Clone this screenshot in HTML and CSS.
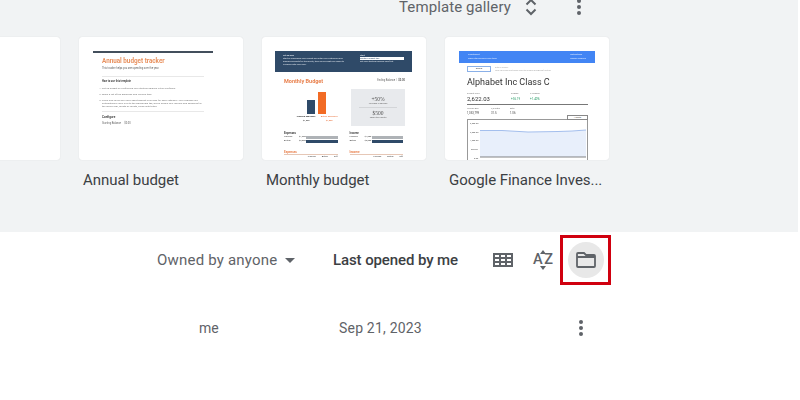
FILE: index.html
```html
<!DOCTYPE html>
<html lang="en">
<head>
    <meta charset="UTF-8">
    <meta name="viewport" content="width=device-width, initial-scale=1.0">
    <title>Google Sheets</title>
    <link rel="stylesheet" href="styles.css">
</head>
<body>
    <section class="gallery">
        <div class="gallery-head">
            <span class="gallery-label">Template gallery</span>
            <svg class="unfold" width="16" height="18" viewBox="0 0 16 18"><path d="M3.500 6.500 8 2l4.500 4.500M3.500 11.500 8 16l4.500-4.500" fill="none" stroke="#5f6368" stroke-width="2"/></svg>
            <div class="kebab"><i></i><i></i><i></i></div>
        </div>

        <div class="templates">
            <div class="template">
                <div class="thumb"></div>
            </div>

            <div class="template">
                <div class="thumb thumb-annual">
                    <div class="annual-bar"></div>
                    <div class="annual-body">
                        <div class="annual-title">Annual budget tracker</div>
                        <div class="tiny annual-sub">This tracker helps you see spending over the year.</div>
                        <div class="annual-rule"></div>
                        <div class="tiny tiny-bold annual-how">How to use this template</div>
                        <ol class="annual-list">
                            <li>Set up budget by confirming your starting balance in the Configure</li>
                            <li>Make a list of the Expenses and Income tabs</li>
                            <li>Track how much you have spent against your plan for each category. Your changes will automatically carry over to the Dashboard tab, which shows your income and spending for the whole year, month by month, along with totals</li>
                        </ol>
                        <div class="annual-rule"></div>
                        <div class="tiny tiny-bold annual-config">Configure</div>
                        <div class="tiny annual-start">Starting Balance &nbsp; &nbsp; $0.00</div>
                    </div>
                </div>
                <div class="template-name">Annual budget</div>
            </div>

            <div class="template">
                <div class="thumb thumb-monthly">
                    <div class="monthly-banner">
                        <div class="monthly-intro">
                            <div class="tiny-bold">Set up plan</div>
                            <div>Start by organizing your budget and enter your categories and planned amounts for the month, then record what you spend to compare with your plan.</div>
                        </div>
                        <div class="monthly-start">
                            <div class="tiny-bold">Start</div>
                            <div class="monthly-input">Monthly budget tips</div>
                            <div>Set your starting balance here first</div>
                        </div>
                    </div>
                    <div class="monthly-head">
                        <div class="monthly-title">Monthly Budget</div>
                        <div class="tiny">Ending Balance &nbsp;|&nbsp; <b>$0.00</b></div>
                    </div>
                    <div class="monthly-main">
                        <div class="monthly-chart">
                            <div class="bars">
                                <div class="bar bar-dark"></div>
                                <div class="bar bar-orange"></div>
                            </div>
                            <div class="bar-labels">
                                <div class="bar-label"><b>Planned Expenses</b><br>$4,500</div>
                                <div class="bar-label bar-label-orange">Actual Expenses<br>$4,800</div>
                            </div>
                        </div>
                        <div class="monthly-stat">
                            <div class="stat-num">+50%</div>
                            <div class="stat-sub">Increase in savings</div>
                            <div class="stat-rule"></div>
                            <div class="stat-num">$500</div>
                            <div class="stat-sub">saved this month</div>
                        </div>
                    </div>
                    <div class="monthly-tables">
                        <div class="monthly-table">
                            <div class="tiny-bold">Expenses</div>
                            <div class="meter"><span>Planned</span><em>$1,500</em><i class="meter-grey"></i></div>
                            <div class="meter"><span>Actual</span><em>$2,000</em><i class="meter-dark"></i></div>
                        </div>
                        <div class="monthly-table">
                            <div class="tiny-bold">Income</div>
                            <div class="meter"><span>Planned</span><em>$1,000</em><i class="meter-grey"></i></div>
                            <div class="meter"><span>Actual</span><em>$2,000</em><i class="meter-dark"></i></div>
                        </div>
                    </div>
                    <div class="monthly-tables monthly-lower">
                        <div class="lower-col">
                            <div class="lower-title">Expenses</div>
                            <div class="lower-cols"><span>Planned</span><span>Actual</span><span>Diff</span></div>
                        </div>
                        <div class="lower-col">
                            <div class="lower-title">Income</div>
                            <div class="lower-cols"><span>Planned</span><span>Actual</span><span>Diff</span></div>
                        </div>
                    </div>
                </div>
                <div class="template-name">Monthly budget</div>
            </div>

            <div class="template">
                <div class="thumb thumb-finance">
                    <div class="finance-banner">
                        <div>Investment<br>Track stock prices over time</div>
                        <div>Instructions<br>Google Finance</div>
                    </div>
                    <div class="finance-body">
                        <div class="finance-search">
                            <div class="finance-symbol">GOOG</div>
                            <div class="tiny finance-hint">Enter a symbol<br>Look up prices and trends using the GOOGLEFINANCE function</div>
                        </div>
                        <div class="finance-name">Alphabet Inc Class C</div>
                        <div class="finance-quote">
                            <div class="quote-main"><span>Current Price</span><b>2,622.03</b></div>
                            <div class="quote-item"><span>Change</span><b>+36.19</b></div>
                            <div class="quote-item"><span>% Change</span><b>+1.40%</b></div>
                        </div>
                        <div class="finance-stats">
                            <div class="stat-wide"><span>Volume Avg</span><b>1,053,799</b></div>
                            <div class="stat-narrow"><span>P/E Ratio</span><b>31.5</b></div>
                            <div class="stat-narrow"><span>Beta</span><b>1.06</b></div>
                        </div>
                        <div class="finance-chart">
                            <div class="finance-range">1 Month</div>
                            <svg width="119" height="42" viewBox="0 0 119 42">
                                <path d="M12 10.500H34L60 12 90 11.500 104 11 118 10V37H12Z" fill="#e8effb"/>
                                <path d="M12 10.500H34L60 12 90 11.500 104 11 118 10" fill="none" stroke="#8fb0e8" stroke-width=".8"/>
                                <path d="M12 37H118" stroke="#666" stroke-width=".8"/>
                                <g class="chart-labels">
                                    <text x="2" y="4">3,000.00</text>
                                    <text x="2" y="12.500">2,000.00</text>
                                    <text x="2" y="21">1,000.00</text>
                                    <text x="3" y="30">500.00</text>
                                    <text x="6" y="38.500">0.00</text>
                                </g>
                            </svg>
                        </div>
                    </div>
                </div>
                <div class="template-name">Google Finance Inves...</div>
            </div>
        </div>
    </section>

    <div class="toolbar">
        <div class="owner-filter">
            <span>Owned by anyone</span>
            <span class="caret"></span>
        </div>
        <div class="sort-label">Last opened by me</div>
        <svg class="grid-icon" width="20" height="14" viewBox="0 0 20 14"><path d="M1 1h18v12H1zM1 5h18M1 9h18M7 1v12M13 1v12" fill="none" stroke="#5f6368" stroke-width="2"/></svg>
        <div class="az-icon">
            <span>A</span>
            <span>Z</span>
            <svg class="az-up" width="6" height="4" viewBox="0 0 6 4"><path d="M3 0 6 4H0Z" fill="#5f6368"/></svg>
            <svg class="az-down" width="6" height="4" viewBox="0 0 6 4"><path d="M0 0H6L3 4Z" fill="#5f6368"/></svg>
        </div>
        <div class="highlight">
            <div class="folder-btn">
                <svg width="20" height="16" viewBox="0 0 20 16"><path d="M2 1h6l2 2h8a1 1 0 0 1 1 1v10a1 1 0 0 1-1 1H2a1 1 0 0 1-1-1V2a1 1 0 0 1 1-1ZM1.500 5h17" fill="none" stroke="#5f6368" stroke-width="1.800"/></svg>
            </div>
        </div>
    </div>

    <div class="file-row">
        <div class="file-owner">me</div>
        <div class="file-date">Sep 21, 2023</div>
        <div class="kebab"><i></i><i></i><i></i></div>
    </div>
</body>
</html>
```

FILE: styles.css
```css
body {
    margin: 0;
    width: 800px;
    height: 400px;
    overflow: hidden;
    background-color: #fff;
    font-family: Roboto, "Liberation Sans", sans-serif;
    color: #3c4043;
}

/* gallery */
.gallery {
    width: 798px;
    height: 232px;
    background-color: #f1f3f4;
    overflow: hidden;
}
.gallery-head {
    display: flex;
    align-items: center;
    height: 14px;
    padding-left: 399px;
}
.gallery-label {
    width: 124px;
    font-size: 15px;
    line-height: 14px;
    letter-spacing: 0.1px;
    white-space: nowrap;
    color: #5f6368;
}
.unfold {
    margin-right: 38px;
}
.kebab {
    display: flex;
    flex-direction: column;
    gap: 2px;
    width: 4px;
}
.kebab i {
    width: 4px;
    height: 4px;
    border-radius: 50%;
    background-color: #5f6368;
}
.templates {
    display: flex;
    gap: 19px;
    margin: 23px 0 0 -104px;
}
.template {
    width: 164px;
    flex-shrink: 0;
}
.thumb {
    height: 123px;
    box-sizing: border-box;
    background-color: #fff;
    border-radius: 3px;
    overflow: hidden;
    box-shadow: 0 0 1px rgba(60, 64, 67, 0.2);
}
.template-name {
    margin: 11px 0 0 4px;
    font-size: 15px;
    line-height: 18px;
    letter-spacing: -0.05px;
    white-space: nowrap;
    color: #3c4043;
}

/* tiny text inside thumbnails */
.tiny {
    font-size: 2.600px;
    line-height: 4px;
    color: #666;
}
.tiny-bold {
    font-weight: 700;
}

/* annual budget */
.thumb-annual {
    padding: 14px 30px 0 14px;
}
.annual-bar {
    height: 2px;
    background-color: #434f5c;
}
.annual-body {
    padding: 4px 9px 0;
    filter: blur(0.35px);
}
.annual-title {
    font-size: 6.300px;
    line-height: 8px;
    font-weight: 700;
    color: #e8915f;
}
.annual-sub {
    margin-top: 2px;
}
.annual-rule {
    height: 1px;
    margin: 5px 0 3px;
    background-color: #e8e8e8;
}
.annual-how {
    margin-top: 2px;
    color: #444;
}
.annual-list {
    margin: 2.500px 0 0;
    padding: 0;
    font-size: 2.500px;
    line-height: 3px;
    color: #777;
}
.annual-list li {
    margin-bottom: 3px;
}
.annual-list + .annual-rule {
    margin-top: 3px;
}
.annual-config {
    margin-top: 3.500px;
    font-size: 3px;
    color: #444;
}
.annual-start {
    margin-top: 2.700px;
}

/* monthly budget */
.thumb-monthly {
    padding: 14px 14px 0 13px;
    filter: blur(0.35px);
}
.monthly-banner {
    display: flex;
    justify-content: space-between;
    height: 21px;
    padding: 3px 8px;
    box-sizing: border-box;
    background-color: #2f4a68;
    font-size: 2.200px;
    line-height: 3px;
    color: #dfe5ec;
}
.monthly-intro {
    width: 62px;
}
.monthly-start {
    width: 44px;
}
.monthly-input {
    background-color: #fff;
    color: #2f4a68;
}
.monthly-head {
    display: flex;
    justify-content: space-between;
    align-items: center;
    padding: 5px 7px 0 9px;
}
.monthly-title {
    font-size: 5.500px;
    line-height: 8px;
    font-weight: 700;
    color: #e9824f;
}
.monthly-main {
    display: flex;
    justify-content: space-between;
    margin-top: 4px;
    padding-right: 7px;
}
.monthly-chart {
    width: 70px;
    padding: 0 0 0 9px;
}
.bars {
    display: flex;
    align-items: flex-end;
    justify-content: center;
    gap: 3px;
    height: 22px;
    margin-top: 3px;
    padding-right: 2px;
}
.bar {
    width: 8px;
}
.bar-dark {
    height: 14px;
    background-color: #2f4a68;
}
.bar-orange {
    height: 22px;
    background-color: #f26b24;
}
.bar-labels {
    display: flex;
    justify-content: center;
    gap: 2px;
    margin-top: 1px;
}
.bar-label {
    width: 21px;
    font-size: 2.300px;
    line-height: 4px;
    text-align: center;
    white-space: nowrap;
    color: #333;
}
.bar-label-orange {
    color: #e9703a;
}
.monthly-stat {
    width: 56px;
    height: 37px;
    padding-top: 7px;
    box-sizing: border-box;
    background-color: #e8eaed;
    text-align: center;
}
.stat-num {
    font-family: "Liberation Serif", serif;
    font-size: 5.500px;
    line-height: 6px;
    color: #555;
}
.stat-sub {
    font-size: 2.200px;
    line-height: 3px;
    color: #666;
}
.stat-rule {
    height: 1px;
    margin: 2px 8px;
    background-color: #d3d5d8;
}
.monthly-tables {
    display: flex;
    gap: 12px;
    margin-top: 5px;
    padding: 0 9px;
    font-size: 2.800px;
    line-height: 4px;
    color: #444;
}
.monthly-table {
    width: 54px;
}
.meter {
    display: flex;
    align-items: center;
    height: 4px;
    font-size: 2.300px;
}
.meter span {
    width: 15px;
}
.meter em {
    width: 7px;
    font-style: normal;
}
.meter i {
    flex: 1;
    height: 3px;
}
.meter-grey {
    background-color: #aeb2b6;
}
.meter-dark {
    background-color: #2f4a68;
}
.monthly-lower {
    margin-top: 7px;
}
.lower-col {
    width: 54px;
}
.lower-title {
    border-bottom: 1px solid #e6c7b6;
    color: #e9824f;
    font-weight: 700;
    font-size: 3px;
}
.lower-cols {
    display: flex;
    justify-content: flex-end;
    gap: 6px;
    font-size: 2.200px;
    line-height: 3px;
}

/* finance */
.thumb-finance {
    padding: 14px 14px 0;
    filter: blur(0.3px);
}
.finance-banner {
    display: flex;
    justify-content: space-between;
    height: 12px;
    padding: 2px 9px;
    box-sizing: border-box;
    background-color: #4285f4;
    font-size: 2.300px;
    line-height: 3.500px;
    color: #e6efff;
}
.finance-body {
    padding: 3px 7px 0 8px;
}
.finance-search {
    display: flex;
    align-items: flex-start;
    gap: 4px;
}
.finance-symbol {
    width: 24px;
    height: 6px;
    box-sizing: border-box;
    border: 1px solid #8ab0e8;
    font-size: 2.400px;
    line-height: 4px;
    text-align: center;
    color: #444;
    flex-shrink: 0;
}
.finance-hint {
    font-size: 2px;
    line-height: 3px;
    color: #aaa;
    white-space: nowrap;
}
.finance-name {
    margin-top: 3px;
    font-size: 9px;
    line-height: 14px;
    white-space: nowrap;
    color: #333;
}
.finance-quote {
    display: flex;
    margin-top: 2.500px;
    padding-bottom: 1px;
    border-bottom: 1px solid #777;
}
.finance-quote span,
.finance-stats span {
    display: block;
    font-size: 2.200px;
    line-height: 3px;
    color: #777;
}
.quote-main {
    width: 44px;
}
.quote-main b {
    display: block;
    font-size: 6px;
    line-height: 8px;
    font-weight: 400;
    color: #333;
}
.quote-item {
    width: 19px;
}
.quote-item b {
    display: block;
    margin-top: 2px;
    font-size: 3px;
    line-height: 4px;
    font-weight: 400;
    color: #2e9e6b;
}
.finance-stats {
    display: flex;
    margin-top: 2px;
}
.stat-wide {
    width: 24px;
}
.stat-narrow {
    width: 19px;
}
.finance-stats b {
    display: block;
    margin-top: 1.500px;
    font-size: 2.800px;
    line-height: 4px;
    font-weight: 400;
    color: #444;
}
.finance-chart {
    position: relative;
    height: 50px;
    margin-top: 4px;
    border: 1px solid #999;
}
.finance-range {
    position: absolute;
    top: -5px;
    right: -1px;
    width: 19px;
    height: 3px;
    background-color: #fff;
    border: 1px solid #888;
    font-size: 2px;
    line-height: 3px;
    text-align: center;
    color: #444;
}
.chart-labels {
    font-size: 2.200px;
    fill: #555;
}

/* toolbar */
.toolbar {
    display: flex;
    align-items: center;
    height: 56px;
    padding-left: 157px;
    font-size: 15px;
}
.owner-filter {
    display: flex;
    align-items: center;
    gap: 8px;
    width: 176px;
    letter-spacing: 0.2px;
    color: #5f6368;
}
.caret {
    width: 0;
    height: 0;
    border-left: 5px solid transparent;
    border-right: 5px solid transparent;
    border-top: 5px solid #5f6368;
}
.sort-label {
    width: 160px;
    font-weight: 500;
    letter-spacing: -0.1px;
    white-space: nowrap;
    color: #3c4043;
}
.grid-icon {
    margin-right: 20px;
}
.az-icon {
    position: relative;
    display: flex;
    width: 20px;
    height: 24px;
    align-items: center;
    justify-content: space-between;
    font-size: 14.500px;
    font-weight: 500;
    line-height: 16px;
    color: #5f6368;
}
.az-up {
    position: absolute;
    top: 2px;
    left: 7px;
}
.az-down {
    position: absolute;
    bottom: 2px;
    left: 7px;
}
.highlight {
    display: flex;
    align-items: center;
    justify-content: center;
    width: 51px;
    height: 50px;
    margin: 0 0 0 7px;
    box-sizing: border-box;
    border: 3px solid #d0000f;
}
.folder-btn {
    display: flex;
    align-items: center;
    justify-content: center;
    width: 36px;
    height: 36px;
    border-radius: 50%;
    background-color: #e8e8e8;
}

/* file row */
.file-row {
    display: flex;
    align-items: center;
    height: 24px;
    margin-top: 28px;
    padding-left: 199px;
    font-size: 14px;
    color: #5f6368;
}
.file-owner {
    width: 140px;
}
.file-date {
    width: 240px;
    letter-spacing: 0.2px;
}
```
